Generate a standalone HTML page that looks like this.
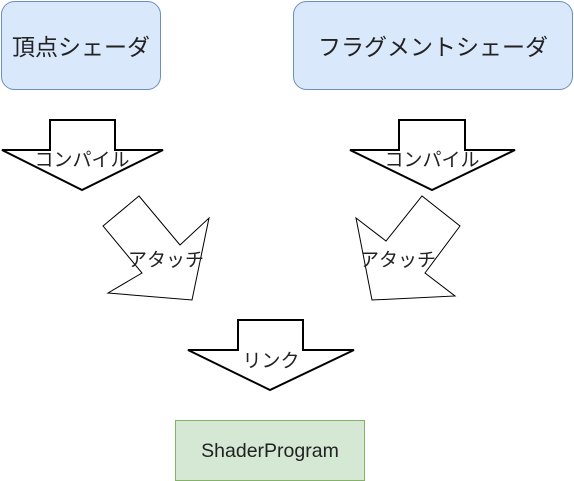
<!DOCTYPE html>
<html><head><meta charset="utf-8"><style>
html,body{margin:0;padding:0;background:#fff;width:574px;height:481px;overflow:hidden}
svg{display:block}
text{font-family:"Liberation Sans","Noto Sans CJK JP",sans-serif;fill:#222}
</style></head><body>
<svg width="574" height="481" viewBox="0 0 574 481">
<rect x="1.5" y="1.5" width="159" height="88" rx="13" fill="#dae8fc" stroke="#6c8ebf"/>
<rect x="293.5" y="1.5" width="279" height="88" rx="13" fill="#dae8fc" stroke="#6c8ebf"/>
<text x="81" y="55" font-size="23" text-anchor="middle">頂点シェーダ</text>
<text x="433" y="55" font-size="23" text-anchor="middle">フラグメントシェーダ</text>

<polygon points="50,120 115,120 115,150 163,150 82,190 2,150 50,150" fill="#fff" stroke="#000" stroke-width="2"/>
<text x="82" y="166" font-size="19" text-anchor="middle">コンパイル</text>
<polygon points="399,120 465,120 465,150 515,150 432,190 350,150 399,150" fill="#fff" stroke="#000" stroke-width="2"/>
<text x="432" y="166" font-size="19" text-anchor="middle">コンパイル</text>

<polygon points="103,226 139,196 180,245 209,218 192,300 108,293 142,273" fill="#fff" stroke="#000" stroke-width="1"/>
<text x="166" y="266" font-size="19" text-anchor="middle">アタッチ</text>
<polygon points="356,218 386,241 422,196 460,226 425,273 455,296 372,300" fill="#fff" stroke="#000" stroke-width="1"/>
<text x="398" y="266" font-size="19" text-anchor="middle">アタッチ</text>

<polygon points="238,320 303,320 303,350 354,350 270,390 188,350 238,350" fill="#fff" stroke="#000" stroke-width="2"/>
<text x="271" y="367" font-size="19" text-anchor="middle">リンク</text>

<rect x="175.5" y="420.5" width="189" height="60" fill="#d5e8d4" stroke="#82b366"/>
<text x="270" y="457" font-size="19.5" text-anchor="middle">ShaderProgram</text>
</svg>
</body></html>
